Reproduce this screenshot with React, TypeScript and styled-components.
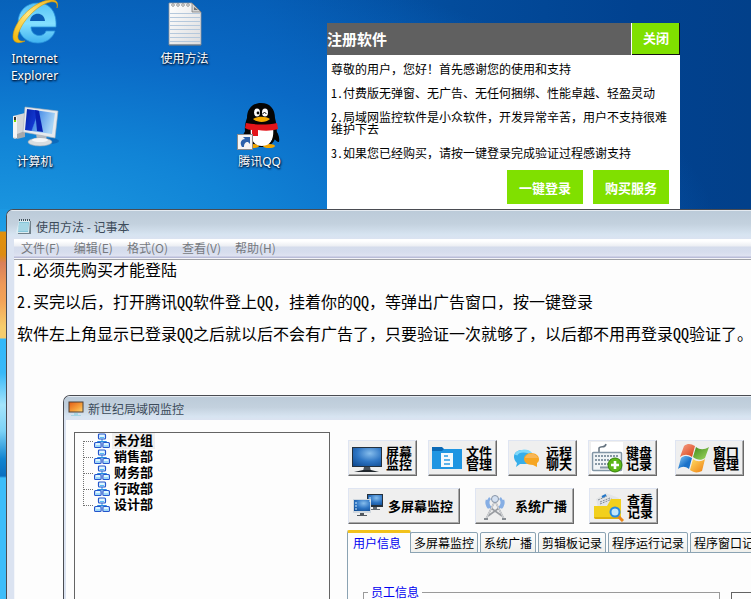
import React, { useState } from "react";
import styled, { createGlobalStyle, css } from "styled-components";

const sans = `"Noto Sans CJK SC", "Noto Sans", sans-serif`;
const mono = `"Noto Sans Mono CJK SC", "Liberation Mono", "Noto Sans CJK SC", monospace`;

const Global = createGlobalStyle`
  * { box-sizing: border-box; }
  body { margin: 0; font-family: ${sans}; font-size: 12px; color: #000; }
  button { font: inherit; color: inherit; border: 0; background: none; padding: 0; margin: 0; }
  ul, p, h1, h2 { margin: 0; padding: 0; }
`;

/* ---------- desktop ---------- */

const Desktop = styled.main`
  position: relative;
  height: 100vh;
  overflow: hidden;
  background:
    linear-gradient(180deg, #1b98e2 0, #1f9ee6 22px, #e0900c 23px, #dd8c12 46px, #d9805a 54px, #ee9a58 76px,
      #f3a357 92px, #f6cd6c 118px, #f6cd6c 129px, #31b8fa 130px, #39b9f8 164px, #a4e4fb 196px, #7cd2f6 222px,
      #1184d0 250px, #0a6fc0 267px, #3cbdfa 269px, #3cbdfa 100%) 0 209px / 12px 100% no-repeat,
    radial-gradient(ellipse 720px 310px at 0 250px, #1f9ee4 0, #1184d6 36%, #0a6ac6 64%, rgba(4, 84, 170, 0) 100%),
    linear-gradient(90deg, #0459ac 0, #0459b0 35%, #034c9c 60%, #014290 85%, #02408a 100%);
`;

const Shortcuts = styled.nav`
  display: grid;
  grid-template-columns: repeat(4, 75px);
  grid-template-rows: 103px 103px;
  margin-left: -3px;
`;

const Shortcut = styled.button<{ $col: number; $row: number }>`
  grid-column: ${(p) => p.$col};
  grid-row: ${(p) => p.$row};
  display: flex;
  flex-direction: column;
  align-items: center;
  justify-content: flex-start;
  font-family: "Noto Sans", ${sans};
  font-size: 12px;
  line-height: 17px;
  color: #fff;
  text-shadow: 1px 1px 2px #001a3c, 0 1px 2px #001a3c;

  svg { display: block; flex: none; margin-bottom: 2px; }
`;

/* ---------- registration dialog ---------- */

const Dialog = styled.section`
  position: absolute;
  left: 327px;
  top: 23px;
  width: 353px;
  height: 187px;
  background: #fff;
`;

const DialogBar = styled.header`
  display: flex;
  justify-content: space-between;
  height: 32px;
  background: #606060;
`;

const DialogTitle = styled.h1`
  font-size: 15px;
  line-height: 31px;
  font-weight: 700;
  color: #fff;
`;

const GreenButton = styled.button`
  width: 76px;
  height: 34px;
  background: #80e000;
  color: #fff;
  font-size: 13px;
  font-weight: 700;
`;

const CloseButton = styled(GreenButton)`
  width: 49px;
  height: 32px;
  padding-bottom: 4px;
  border: solid #fff;
  border-width: 0 0 0 1px;
  box-shadow: inset -1px -1px 0 #111;
`;

const DialogText = styled.div`
  display: flex;
  flex-direction: column;
  gap: 12px;
  padding: 8px 9px 11px 4px;
  font-family: ${mono};
  font-size: 12px;
  line-height: 12px;
`;

const DialogActions = styled.footer`
  display: flex;
  justify-content: flex-end;
  gap: 10px;
  padding-right: 11px;
`;

/* ---------- shared window chrome ---------- */

const Window = styled.section<{ $left: number; $top: number; $frame: number }>`
  position: absolute;
  left: ${(p) => p.$left}px;
  top: ${(p) => p.$top}px;
  right: 0;
  bottom: 0;
  display: flex;
  flex-direction: column;
  padding-left: ${(p) => p.$frame}px;
  overflow: hidden;
  border: solid #4a4c52;
  border-width: 1px 0 0 1px;
  border-top-left-radius: 7px;
  background: #dbe3f1;
`;

const TitleBar = styled.header<{ $height: number; $frame: number }>`
  display: flex;
  flex: none;
  align-items: center;
  gap: 4px;
  height: ${(p) => p.$height}px;
  margin-left: -${(p) => p.$frame}px;
  padding-top: ${(p) => (p.$height > 24 ? 4 : 0)}px;
  padding-left: ${(p) => p.$frame + 2}px;
  border-top: 1px solid #e4eaf1;
  background: linear-gradient(#bccbd9, #c3d1de 45%, #d7e4f1 85%, #dbe3f1);
  color: #3c4b5a;
`;

const WindowTitle = styled.h2`
  font-size: 12px;
  font-weight: 400;
  line-height: 18px;
  white-space: nowrap;
`;

/* ---------- notepad ---------- */

const MenuBar = styled.div`
  display: flex;
  flex: none;
  gap: 14px;
  height: 21px;
  padding-left: 7px;
  border-bottom: 1px solid #9fa1a6;
  background: linear-gradient(#fff 0, #fff 2px, #eceef3 7px, #d5dcec 8px, #d6dded 13px, #dfe3f1 17px, #b9bcd8 18px, #b9bcd8 19px, #f4f4f8 19px);
`;

const MenuItem = styled.button`
  font-family: ${sans};
  line-height: 18px;
  height: 18px;
  color: #76797e;
  white-space: nowrap;
`;

const Editor = styled.textarea`
  flex: 1;
  width: 100%;
  border: solid #f4f6fa;
  border-width: 0 0 0 1px;
  margin: 0;
  padding: 1px 0 0 2px;
  outline: 0;
  resize: none;
  overflow: hidden;
  background: #fdfdfd;
  color: #000;
  font-family: ${mono};
  font-size: 16px;
  line-height: 16px;
  white-space: pre;
`;

/* ---------- monitor application ---------- */

const AppBody = styled.div`
  display: flex;
  flex: 1;
  min-height: 0;
  gap: 17px;
  padding: 12px 0 0 8px;
  background: #fdfdfd;
`;

const TreePanel = styled.aside`
  flex: none;
  width: 256px;
  border: solid #646464;
  border-width: 1px 1px 0 1px;
  padding-left: 8px;
`;

const Tree = styled.ul`
  list-style: none;
`;

const TreeRow = styled.li`
  display: flex;
  align-items: center;
  height: 16px;

  svg { display: block; flex: none; }
`;

const TreeLabel = styled.button<{ $selected: boolean }>`
  height: 16px;
  margin-left: 2px;
  padding: 0 2px 2px;
  background: ${(p) => (p.$selected ? "#efefef" : "transparent")};
  font-size: 13px;
  font-weight: 700;
  line-height: 14px;
`;

const Work = styled.div`
  flex: 1;
  min-width: 0;
  display: flex;
  flex-direction: column;
`;

const Tools = styled.div`
  display: flex;
  flex-direction: column;
  gap: 12px;
  padding: 8px 0 6px 1px;
`;

const ToolRow = styled.div<{ $gap: number }>`
  display: flex;
  flex: none;
  gap: ${(p) => p.$gap}px;
`;

const ToolButton = styled.button<{ $wide?: boolean }>`
  display: flex;
  flex: none;
  align-items: center;
  gap: 3px;
  height: 36px;
  padding: ${(p) => (p.$wide ? "0 6px 0 4px" : "0 4px 0 2px")};
  border: 1px solid #dfe5f2;
  border-right-color: #696969;
  border-bottom-color: #696969;
  box-shadow: inset -1px -1px 0 #a9a9a9;
  background: #efefef;
  font-size: 13px;
  font-weight: 700;
  line-height: 12px;
  white-space: pre;

  svg { display: block; flex: none; }
`;

const Tabs = styled.div`
  display: flex;
  flex: none;
  align-items: flex-end;
  gap: 2px;
  height: 23px;
  box-shadow: inset 0 -1px 0 #8ba3b3;
`;

const Tab = styled.button<{ $active: boolean }>`
  flex: none;
  height: 21px;
  padding: 0 3px;
  border: 1px solid #8ba3b3;
  border-radius: 2px 2px 0 0;
  background: linear-gradient(#fdfdfd, #f0f0ec);
  line-height: 18px;
  white-space: nowrap;

  ${(p) =>
    p.$active &&
    css`
      height: 23px;
      margin-right: -3px;
      padding: 0 9px 1px 5px;
      border-top: 3px solid #f2c21c;
      border-bottom: 0;
      background: #fdfdfd;
      color: #0000f0;
    `}
`;

const TabPage = styled.div`
  display: flex;
  flex: 1;
  gap: 11px;
  min-height: 46px;
  padding: 31px 0 0 15px;
  border-left: 1px solid #8ba3b3;
`;

const Group = styled.fieldset`
  flex: none;
  width: 357px;
  min-width: 0;
  margin: 0;
  padding: 0 0 0 4px;
  border: 1px solid #9a9a9a;
  border-bottom: 0;

  legend { padding: 0 3px; color: #0000f0; line-height: 16px; }
`;

const SidePane = styled.div`
  flex: 1;
  margin-top: 8px;
  border: solid #646464;
  border-width: 1px 0 0 1px;
`;

/* ---------- drawings ---------- */

const ExplorerIcon = () => (
  <svg width="50" height="48" viewBox="0 0 50 48" aria-hidden="true">
    <defs>
      <linearGradient id="ie" gradientUnits="userSpaceOnUse" x1="0" y1="4" x2="0" y2="43">
        <stop offset="0" stopColor="#58c4f6" /><stop offset=".5" stopColor="#84e0ff" /><stop offset="1" stopColor="#3fb2f0" />
      </linearGradient>
      <linearGradient id="ring" x1="0" y1="1" x2="1" y2="0">
        <stop offset="0" stopColor="#f2b400" /><stop offset=".5" stopColor="#ffe680" /><stop offset="1" stopColor="#f0b010" />
      </linearGradient>
    </defs>
    <path d="M18 26.500H45.500" stroke="url(#ie)" strokeWidth="0" />
    <path d="M8 23C8 11 16 3 28 3s19 9 18 24H21c0 10 13 11 15 4h9c-2 7-9 12-17 12C16 43 8 35 8 23z" fill="url(#ie)" stroke="#2b94dc" strokeWidth=".8" />
    <path d="M20 21c1-9 14-10 15 0z" fill="#0a5cb4" />
    <path d="M47 8C49 2 46-1 39 0 23 2 3 22 3 37c0 6 6 7 12 4-5 1-8-1-7-6C11 22 27 5 40 2c5-1 8 1 7 6z" fill="url(#ring)" stroke="#d79a00" strokeWidth=".6" />
  </svg>
);

const ComputerIcon = () => (
  <svg width="50" height="48" viewBox="0 0 50 48" aria-hidden="true">
    <defs>
      <linearGradient id="scr" x1="0" y1="0" x2="1" y2=".3">
        <stop offset="0" stopColor="#0620a8" /><stop offset=".42" stopColor="#1238d0" /><stop offset=".46" stopColor="#4d90e8" /><stop offset="1" stopColor="#a8d4f6" />
      </linearGradient>
    </defs>
    <ellipse cx="40" cy="38" rx="9" ry="3" fill="#0a58a8" opacity=".6" />
    <path d="M3 13l12-3v22L5 36l-2-1z" fill="#d4d6d8" />
    <path d="M3 13l4 1v21l-4-1z" fill="#f4f4f4" />
    <path d="M7 31l8-3v6l-8 2z" fill="#a4a8ac" />
    <rect x="4" y="14" width="2" height="3" fill="#333" /><rect x="4" y="17" width="2" height="2" fill="#78d800" />
    <path d="M26 30h11l-1 8h-9z" fill="#b8bcc2" />
    <path d="M15 4l33 4-3 27-32-6z" fill="#e6eaee" stroke="#a8b0b8" strokeWidth=".6" />
    <path d="M17 6l28 4-3 21-27-4z" fill="url(#scr)" />
    <path d="M25 7l4 1 4 21-6-1z" fill="#0820b0" />
    <ellipse cx="30" cy="39" rx="12" ry="4" fill="#d9dde0" stroke="#9ca4ac" strokeWidth=".6" />
    <ellipse cx="30" cy="37" rx="8" ry="2" fill="#f4f6f8" />
  </svg>
);

const TextFileIcon = () => (
  <svg width="50" height="48" viewBox="0 0 50 48" aria-hidden="true">
    <defs><linearGradient id="paper" x1="0" y1="0" x2="1" y2="1"><stop offset="0" stopColor="#fff" /><stop offset="1" stopColor="#dcdcde" /></linearGradient></defs>
    <path d="M9 3h23l9 9v33H9z" fill="url(#paper)" stroke="#8f969c" strokeWidth=".8" />
    <path d="M9 45h32" stroke="#60707e" />
    <path d="M10 13.500h30M10 17.500h30M10 21.500h30M10 25.500h30M10 29.500h30M10 33.500h30M10 37.500h30M10 41.500h30" stroke="#b5c8dc" />
    <path d="M32 3v9h9z" fill="#d2d2d2" stroke="#707070" strokeWidth=".7" />
    <path d="M34 7v3h4z" fill="#707070" />
    <g fill="#fff" stroke="#777" strokeWidth=".8"><circle cx="13" cy="5" r="1.300" /><circle cx="18" cy="5" r="1.300" /><circle cx="23" cy="5" r="1.300" /><circle cx="28" cy="5" r="1.300" /></g>
  </svg>
);

const PenguinIcon = () => (
  <svg width="48" height="48" viewBox="0 0 48 48" aria-hidden="true">
    <path d="M11 26c-4 4-5 8-4 13 2 0 3-2 4-4M38 26c4 3 6 8 5 13-2 0-4-2-5-4" fill="#050505" />
    <path d="M25 0C16 0 11 6 11 15c-3 8-3 16 1 23 5 8 21 8 26 0 4-7 3-15 1-23C39 6 34 0 25 0z" fill="#050505" />
    <ellipse cx="17" cy="43" rx="6" ry="2" fill="#f3a600" /><ellipse cx="33" cy="43" rx="6" ry="2" fill="#f3a600" />
    <path d="M15 24h22c1 8 0 19-11 19S14 32 15 24z" fill="#fff" />
    <ellipse cx="21" cy="9.500" rx="3" ry="4" fill="#fff" /><ellipse cx="29" cy="9.500" rx="3" ry="4" fill="#fff" />
    <circle cx="22" cy="10" r="1.400" /><path d="M27 11c0-2 3-2 3 0" fill="none" stroke="#000" />
    <path d="M17 16c4-3 13-3 17 0-4 4-13 4-17 0z" fill="#f6ab00" />
    <path d="M10 20c9 2 22 2 31 0l1 6c-6 2-14 2-20 1v6h-6v-6c-3 0-5-1-7-2z" fill="#e3151b" />
    <rect x="1.500" y="31.500" width="15" height="15" fill="#f5f5f5" stroke="#8b8b8b" />
    <path d="M6 44c-3-5 0-8 3-8l-2-2h7v7l-2-2c-3 0-4 2-4 5z" fill="#2c62ac" />
  </svg>
);

const NotepadIcon = () => (
  <svg width="16" height="16" viewBox="0 0 16 16" aria-hidden="true">
    <path d="M3 2h12v13H2z" fill="#71818b" /><path d="M3 1h11l-1 13H0z" fill="#dcecf2" />
    <path d="M3 3h10l-1 10H2z" fill="#86c6da" /><path d="M3 5h9M3 7h9M2 9h10M2 11h10" stroke="#c4e6ef" />
    <path d="M3 1h11" stroke="#43525c" strokeWidth="2" strokeDasharray="1 1" />
  </svg>
);

const MonitorTitleIcon = () => (
  <svg width="16" height="16" viewBox="0 0 16 16" aria-hidden="true">
    <defs><linearGradient id="sun" x1="0" y1="0" x2="1" y2="1"><stop offset="0" stopColor="#e25b16" /><stop offset=".6" stopColor="#f6a23c" /><stop offset="1" stopColor="#ffd978" /></linearGradient></defs>
    <rect x="1" y="1" width="14" height="10" fill="url(#sun)" stroke="#4c4038" />
    <path d="M6 12h4v2h3v1H3v-1h3z" fill="#a5d5e4" />
  </svg>
);

const NetworkIcon = ({ first, last }: { first: boolean; last: boolean }) => (
  <svg width="27" height="16" viewBox="0 0 27 16" aria-hidden="true">
    <g stroke="#707070" strokeDasharray="1 1">
      <path d={`M.5 ${first ? 8 : 0}V${last ? 9 : 16}`} /><path d="M1 8.500h10" />
    </g>
    <path d="M19 6v4M14.500 10V8.500h9V10" stroke="#2a8ce0" fill="none" />
    <g fill="#dff6ff" stroke="#2355cc" strokeWidth="1.200">
      <rect x="15.500" y="1" width="7" height="5" rx="1" /><rect x="11.600" y="9.500" width="6.500" height="5" rx="1" /><rect x="19.900" y="9.500" width="6.500" height="5" rx="1" />
    </g>
    <path d="M17 4.500h4M13 13h4M21 13h4" stroke="#58bcf4" />
  </svg>
);

const ScreenDefs = () => (
  <defs>
    <radialGradient id="blue" cx=".6" cy=".3" r=".9"><stop offset="0" stopColor="#86bdec" /><stop offset=".5" stopColor="#2f76c4" /><stop offset="1" stopColor="#0c478e" /></radialGradient>
  </defs>
);

const ScreenIcon = () => (
  <svg width="32" height="32" viewBox="0 0 32 32" aria-hidden="true">
    <ScreenDefs />
    <rect x="1" y="5" width="30" height="20" fill="#24303c" /><rect x="2" y="6" width="28" height="18" fill="url(#blue)" />
    <path d="M13 25h6l1 4h-8z" fill="#48525c" /><path d="M3 30l9-2h8l8 2z" fill="#20272d" />
  </svg>
);

const ScreensIcon = () => (
  <svg width="32" height="32" viewBox="0 0 32 32" aria-hidden="true">
    <g><rect x="14" y="4" width="16" height="13" fill="#26313b" /><rect x="15" y="5" width="14" height="10" fill="url(#blue)" /><path d="M20 17h4v2h3v1H17v-1h3z" fill="#646b72" /></g>
    <g><rect x="0" y="9" width="18" height="14" fill="#d0d8df" /><rect x="1" y="10" width="16" height="11" fill="url(#blue)" /><path d="M7 23h4v2h3v1H4v-1h3z" fill="#51585f" /></g>
    <path d="M2 13h2M2 16h2M2 19h2M16 8h2M16 11h2" stroke="#d8f0ff" />
  </svg>
);

const FolderIcon = () => (
  <svg width="32" height="32" viewBox="0 0 32 32" aria-hidden="true">
    <path d="M1 5h10l2 2h17v20H1z" fill="#0b69b5" /><path d="M1 9h10l2-2h18v20H1z" fill="#1f95e2" />
    <path d="M10 11h12v14H10z" fill="#f3f9fd" /><path d="M13 14h4M13 18h6M13 22h6" stroke="#2b9ae3" strokeWidth="1.300" />
  </svg>
);

const ChatIcon = () => (
  <svg width="32" height="32" viewBox="0 0 32 32" aria-hidden="true">
    <path d="M12 8c6 0 10 3 10 8s-4 6-10 6H9l-4 3 1-4C1 16 2 8 12 8z" fill="#35aeea" />
    <path d="M5 13c2-5 12-5 15-1" fill="none" stroke="#7ed8fa" strokeWidth="3" />
    <path d="M20 11c5 0 8 3 8 6s-1 3-2 4v4l-4-2c-6 0-9-3-9-6s3-6 7-6z" fill="#f6a623" />
    <path d="M14 16c1-5 11-6 13 0z" fill="#f8b656" />
  </svg>
);

const KeyboardIcon = () => (
  <svg width="32" height="32" viewBox="0 0 32 32" aria-hidden="true">
    <path fill="#fff" d="M0 0h32v32H0z" />
    <path d="M8 10V6c2-3 6 1 7-4" fill="none" stroke="#65737f" strokeWidth="1.500" />
    <rect x="1.500" y="10.500" width="29" height="18" rx="1" fill="#f0f4f6" stroke="#8296a6" strokeWidth="1.500" />
    <path d="M4 14h24M4 18h24M4 22h24" stroke="#8798a5" strokeWidth="2.200" strokeDasharray="2 1" />
    <path d="M9 25.500h10" stroke="#8798a5" strokeWidth="2" />
    <circle cx="24" cy="23" r="7" fill="#5cb617" stroke="#348208" /><path d="M24 19v8M20 23h8" stroke="#fff" strokeWidth="2.600" />
  </svg>
);

const FlagIcon = () => (
  <svg width="32" height="32" viewBox="0 0 32 32" aria-hidden="true">
    <defs>
      <linearGradient id="fr" x1="0" y1="0" x2="1" y2="1"><stop offset="0" stopColor="#f6a38b" /><stop offset="1" stopColor="#da3f13" /></linearGradient>
      <linearGradient id="fg" x1="0" y1="0" x2="1" y2="1"><stop offset="0" stopColor="#428c1c" /><stop offset="1" stopColor="#a2d861" /></linearGradient>
      <linearGradient id="fb" x1="0" y1="0" x2="1" y2="1"><stop offset="0" stopColor="#86c8f6" /><stop offset=".6" stopColor="#1971c9" /></linearGradient>
      <linearGradient id="fy" x1="0" y1="0" x2="1" y2="1"><stop offset="0" stopColor="#ffdf65" /><stop offset="1" stopColor="#ee7d10" /></linearGradient>
    </defs>
    <path d="M6 4c4-3 7-2 11 0l-3 11c-4-3-8-3-12 0z" fill="url(#fr)" />
    <path d="M18 5c4 3 8 3 13 0l-4 11c-4 3-8 2-12-1z" fill="url(#fg)" />
    <path d="M3 16c4-3 7-2 11 0l-3 11c-4-3-7-3-11 0z" fill="url(#fb)" />
    <path d="M15 17c4 3 8 3 12 0l-3 12c-4 2-8 2-12-1z" fill="url(#fy)" />
  </svg>
);

const TowerIcon = () => (
  <svg width="32" height="32" viewBox="0 0 32 32" aria-hidden="true">
    <g fill="none" stroke="#86aee4" strokeWidth="2.500"><path d="M10 8c-3 3-2 8 1 10M20 8c3 3 2 8-1 10M7 10c-1 3 0 6 2 8M23 10c1 3 0 6-2 8" /></g>
    <path d="M15 11L6 29M15 11l9 18M11 18l11 8M19 18L8 26" fill="none" stroke="#9a9da2" strokeWidth="1.600" />
    <path d="M15 11L6 29M15 11l9 18" stroke="#dcdee1" />
    <circle cx="15" cy="9" r="3.500" fill="#d3e0f1" stroke="#8794a5" /><path d="M4 29h4M22 29h4" stroke="#888d93" strokeWidth="2" />
  </svg>
);

const SearchFolderIcon = () => (
  <svg width="32" height="32" viewBox="0 0 32 32" aria-hidden="true">
    <path d="M4 9l10-6 13 5-2 9-19 1z" fill="#e3e5e7" /><path d="M6 10l9-4M8 12l10-4M8 14l12-5" stroke="#828b94" strokeDasharray="2 1" /><path d="M10 7l4-2" stroke="#2377c8" strokeWidth="2" />
    <path d="M2 16h13l4-7h10v18c0 1-1 2-2 2H4c-1 0-2-1-2-2z" fill="#f2d01c" /><path d="M2 27c0 1 1 2 2 2h23l2-2z" fill="#ddb10c" />
    <path d="M26 26l5 5" stroke="#e98718" strokeWidth="3" /><circle cx="23" cy="22" r="4.500" fill="#c4e7fb" stroke="#2889dd" strokeWidth="2" />
  </svg>
);

/* ---------- content ---------- */

const menus = ["文件(F)", "编辑(E)", "格式(O)", "查看(V)", "帮助(H)"];
const note = `1.必须先购买才能登陆

2.买完以后，打开腾讯QQ软件登上QQ，挂着你的QQ，等弹出广告窗口，按一键登录

软件左上角显示已登录QQ之后就以后不会有广告了，只要验证一次就够了，以后都不用再登录QQ验证了。`;
const departments = ["未分组", "销售部", "财务部", "行政部", "设计部"];
const tabs = ["用户信息", "多屏幕监控", "系统广播", "剪辑板记录", "程序运行记录", "程序窗口记录"];

export default function App() {
  const [selected, setSelected] = useState(0);
  const [tab, setTab] = useState(0);

  return (
    <>
      <Global />
      <Desktop>
        <Shortcuts aria-label="桌面">
          <Shortcut $col={1} $row={1}><ExplorerIcon />Internet<br />Explorer</Shortcut>
          <Shortcut $col={3} $row={1}><TextFileIcon />使用方法</Shortcut>
          <Shortcut $col={1} $row={2}><ComputerIcon />计算机</Shortcut>
          <Shortcut $col={4} $row={2}><PenguinIcon />腾讯QQ</Shortcut>
        </Shortcuts>

        <Dialog>
          <DialogBar>
            <DialogTitle>注册软件</DialogTitle>
            <CloseButton>关闭</CloseButton>
          </DialogBar>
          <DialogText>
            <p>尊敬的用户，您好！首先感谢您的使用和支持</p>
            <p>1.付费版无弹窗、无广告、无任何捆绑、性能卓越、轻盈灵动</p>
            <p>2.局域网监控软件是小众软件，开发异常辛苦，用户不支持很难维护下去</p>
            <p>3.如果您已经购买，请按一键登录完成验证过程感谢支持</p>
          </DialogText>
          <DialogActions>
            <GreenButton>一键登录</GreenButton>
            <GreenButton>购买服务</GreenButton>
          </DialogActions>
        </Dialog>

        <Window $left={6} $top={209} $frame={7}>
          <TitleBar $height={29} $frame={7}>
            <NotepadIcon />
            <WindowTitle>使用方法 - 记事本</WindowTitle>
          </TitleBar>
          <MenuBar role="menubar">
            {menus.map((m) => <MenuItem key={m} role="menuitem">{m}</MenuItem>)}
          </MenuBar>
          <Editor aria-label="记事本" defaultValue={note} wrap="off" spellCheck={false} />
        </Window>

        <Window $left={63} $top={395} $frame={2}>
          <TitleBar $height={24} $frame={2}>
            <MonitorTitleIcon />
            <WindowTitle>新世纪局域网监控</WindowTitle>
          </TitleBar>
          <AppBody>
            <TreePanel>
              <Tree>
                {departments.map((d, i) => (
                  <TreeRow key={d}>
                    <NetworkIcon first={i === 0} last={i === departments.length - 1} />
                    <TreeLabel $selected={i === selected} onClick={() => setSelected(i)}>{d}</TreeLabel>
                  </TreeRow>
                ))}
              </Tree>
            </TreePanel>
            <Work>
              <Tools>
                <ToolRow $gap={18}>
                  <ToolRow $gap={11}>
                    <ToolButton><ScreenIcon />{"屏幕\n监控"}</ToolButton>
                    <ToolButton><FolderIcon />{"文件\n管理"}</ToolButton>
                    <ToolButton><ChatIcon />{"远程\n聊天"}</ToolButton>
                    <ToolButton><KeyboardIcon />{"键盘\n记录"}</ToolButton>
                  </ToolRow>
                  <ToolButton><FlagIcon />{"窗口\n管理"}</ToolButton>
                </ToolRow>
                <ToolRow $gap={15}>
                  <ToolButton $wide><ScreensIcon />多屏幕监控</ToolButton>
                  <ToolButton $wide><TowerIcon />系统广播</ToolButton>
                  <ToolButton><SearchFolderIcon />{"查看\n记录"}</ToolButton>
                </ToolRow>
              </Tools>
              <Tabs role="tablist">
                {tabs.map((t, i) => (
                  <Tab key={t} role="tab" aria-selected={i === tab} $active={i === tab} onClick={() => setTab(i)}>{t}</Tab>
                ))}
              </Tabs>
              <TabPage role="tabpanel">
                <Group><legend>员工信息</legend></Group>
                <SidePane />
              </TabPage>
            </Work>
          </AppBody>
        </Window>
      </Desktop>
    </>
  );
}
